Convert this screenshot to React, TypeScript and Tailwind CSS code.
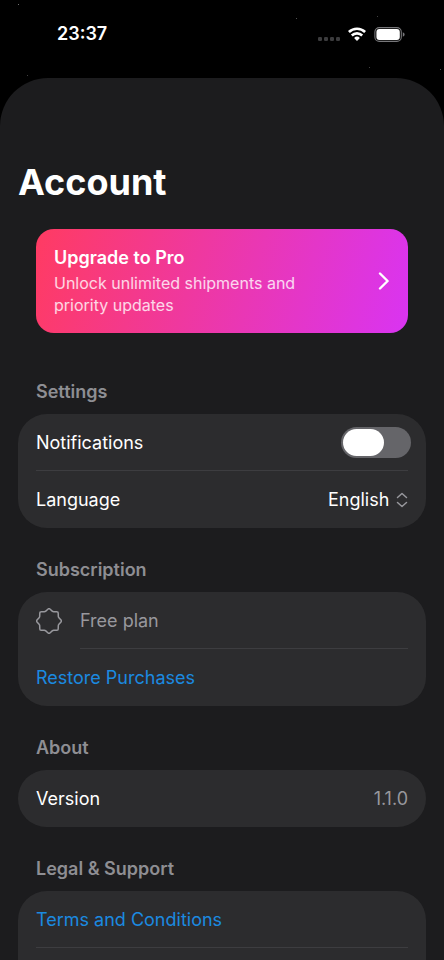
import { useState } from "react";
import type { ReactNode } from "react";

const stars = [
  { x: "4%", y: 4, tone: "bg-neutral-500" },
  { x: "6%", y: 75, tone: "bg-neutral-700" },
  { x: "66.6%", y: 18, tone: "bg-neutral-600" },
  { x: "85%", y: 16, tone: "bg-neutral-700" },
  { x: "83.2%", y: 67, tone: "bg-neutral-700" },
  { x: "99.2%", y: 69, tone: "bg-neutral-600" },
];

function StatusBar() {
  return (
    <div className="relative flex h-[78px] shrink-0 items-start justify-between pt-[22px] pr-[39px] pl-[57px]">
      {stars.map((s) => (
        <span
          key={s.x}
          className={`absolute size-px ${s.tone}`}
          style={{ left: s.x, top: s.y }}
        />
      ))}
      <time className="text-lg leading-6 font-semibold">23:37</time>
      <div className="flex h-6 items-center gap-2">
        <svg width="22" height="14" viewBox="0 0 22 14" fill="#3c3c3e">
          <rect x="0" y="10" width="4" height="4" rx="1.2" />
          <rect x="6" y="10" width="4" height="4" rx="1.2" />
          <rect x="12" y="10" width="4" height="4" rx="1.2" />
          <rect x="18" y="10" width="4" height="4" rx="1.2" />
        </svg>
        <svg width="18" height="14" viewBox="0 0 18 14" fill="none" stroke="white" strokeWidth="2.6">
          <path d="M.9 5a11.6 11.6 0 0 1 16.2 0" />
          <path d="M3.8 8.5a7.4 7.4 0 0 1 10.4 0" />
          <path d="M9 14 6.1 11a4.2 4.2 0 0 1 5.8 0Z" fill="white" stroke="none" />
        </svg>
        <svg width="31" height="15" viewBox="0 0 31 15">
          <rect x="0.9" y="0.6" width="26.4" height="13.8" rx="4.4" fill="none" stroke="#77777a" strokeWidth="1.1" />
          <rect x="2.4" y="2.1" width="23.4" height="10.8" rx="3" fill="white" />
          <path d="M28.8 5.2c1.2.5 1.8 1.3 1.8 2.3s-.6 1.8-1.8 2.3z" fill="#77777a" />
        </svg>
      </div>
    </div>
  );
}

function SealIcon() {
  return (
    <svg width="26" height="26" viewBox="-13 -13 26 26" fill="none" stroke="#98989d" strokeWidth="1.5" strokeLinejoin="round">
      <path d="M-.9-12Q0-12.8.9-12L3.2-9.9Q4-9.2 5-9.3L7.9-9.2Q9.2-9.2 9.2-7.9L9.3-5Q9.2-4 9.9-3.2L12-.9Q12.8 0 12 .9L9.9 3.2Q9.2 4 9.3 5L9.2 7.9Q9.2 9.2 7.9 9.2L5 9.3Q4 9.2 3.2 9.9L.9 12Q0 12.8-.9 12L-3.2 9.9Q-4 9.2-5 9.3L-7.9 9.2Q-9.2 9.2-9.2 7.9L-9.3 5Q-9.2 4-9.9 3.2L-12 .9Q-12.8 0-12-.9L-9.9-3.2Q-9.2-4-9.3-5L-9.2-7.9Q-9.2-9.2-7.9-9.2L-5-9.3Q-4-9.2-3.2-9.9Z" />
    </svg>
  );
}

function Section({ title, children, last }: { title: string; children: ReactNode; last?: boolean }) {
  return (
    <section className={last ? "flex flex-1 flex-col" : "shrink-0"}>
      <h2 className="px-[18px] pt-[30px] pb-[10px] text-lg leading-6 font-semibold text-[#8e8e93]">{title}</h2>
      <div className={`bg-[#2c2c2e] ${last ? "flex-1 rounded-t-[29px]" : "rounded-[29px]"}`}>{children}</div>
    </section>
  );
}

export default function App() {
  const [notifications, setNotifications] = useState(false);
  const [language, setLanguage] = useState("en");

  return (
    <div className="flex h-screen flex-col overflow-hidden bg-black font-['Inter',sans-serif] text-white">
      <StatusBar />

      <main className="flex flex-1 flex-col rounded-t-[48px] bg-[#1c1c1e] px-[18px] pt-20">
        <h1 className="text-4xl leading-[48px] font-bold">Account</h1>

        {/* Upgrade banner */}
        <button
          type="button"
          className="mx-[18px] mt-[23px] mb-[17px] flex items-center justify-between rounded-[18px] bg-linear-[105deg] from-[#ff3b62] to-[#d934f2] px-[18px] py-[17px] text-left"
        >
          <span className="flex max-w-[260px] flex-col gap-0.5">
            <span className="text-lg leading-6 font-semibold">Upgrade to Pro</span>
            <span className="text-base leading-[22px] text-white/80">Unlock unlimited shipments and priority updates</span>
          </span>
          <svg width="12" height="18" viewBox="0 0 12 18" fill="none" stroke="white" strokeWidth="2.4" strokeLinecap="round" strokeLinejoin="round">
            <path d="M2 1.5 9.6 9 2 16.5" />
          </svg>
        </button>

        <Section title="Settings">
          <div className="flex h-[57px] items-center justify-between pr-[15px] pl-[18px]">
            <label htmlFor="notifications" className="text-lg">Notifications</label>
            <input
              id="notifications"
              type="checkbox"
              role="switch"
              checked={notifications}
              onChange={(e) => setNotifications(e.target.checked)}
              className="flex h-[31px] w-[70px] appearance-none rounded-full bg-[#656569] p-0.5 before:h-[27px] before:w-[41px] before:rounded-full before:bg-white checked:justify-end checked:bg-green-500"
            />
          </div>
          <hr className="mx-[18px] -mt-px border-[#3d3d40]" />
          <div className="flex h-[57px] items-center justify-between px-[18px]">
            <label htmlFor="language" className="text-lg">Language</label>
            <div className="flex items-center gap-1.5">
              <select
                id="language"
                value={language}
                onChange={(e) => setLanguage(e.target.value)}
                className="appearance-none bg-transparent text-lg"
              >
                <option value="en">English</option>
              </select>
              <svg width="12" height="16" viewBox="0 0 12 16" fill="none" stroke="#98989d" strokeWidth="1.5" strokeLinecap="round" strokeLinejoin="round">
                <path d="M1.5 5.5 6 1.5l4.5 4M1.5 10.5l4.5 4 4.5-4" />
              </svg>
            </div>
          </div>
        </Section>

        <Section title="Subscription">
          <div className="flex h-[57px] items-center gap-[18px] px-[18px] text-lg text-[#98989d]">
            <SealIcon />
            Free plan
          </div>
          <hr className="mr-[18px] -mt-px ml-[62px] border-[#3d3d40]" />
          <button type="button" className="flex h-[57px] w-full items-center px-[18px] text-lg text-[#1b8ae0]">
            Restore Purchases
          </button>
        </Section>

        <Section title="About">
          <div className="flex h-[57px] items-center justify-between px-[18px] text-lg">
            <span>Version</span>
            <span className="text-[#98989d]">1.1.0</span>
          </div>
        </Section>

        <Section title="Legal & Support" last>
          <a href="#terms" className="flex h-[57px] items-center px-[18px] text-lg text-[#1b8ae0]">
            Terms and Conditions
          </a>
          <hr className="mx-[18px] -mt-px border-[#3d3d40]" />
        </Section>
      </main>
    </div>
  );
}
